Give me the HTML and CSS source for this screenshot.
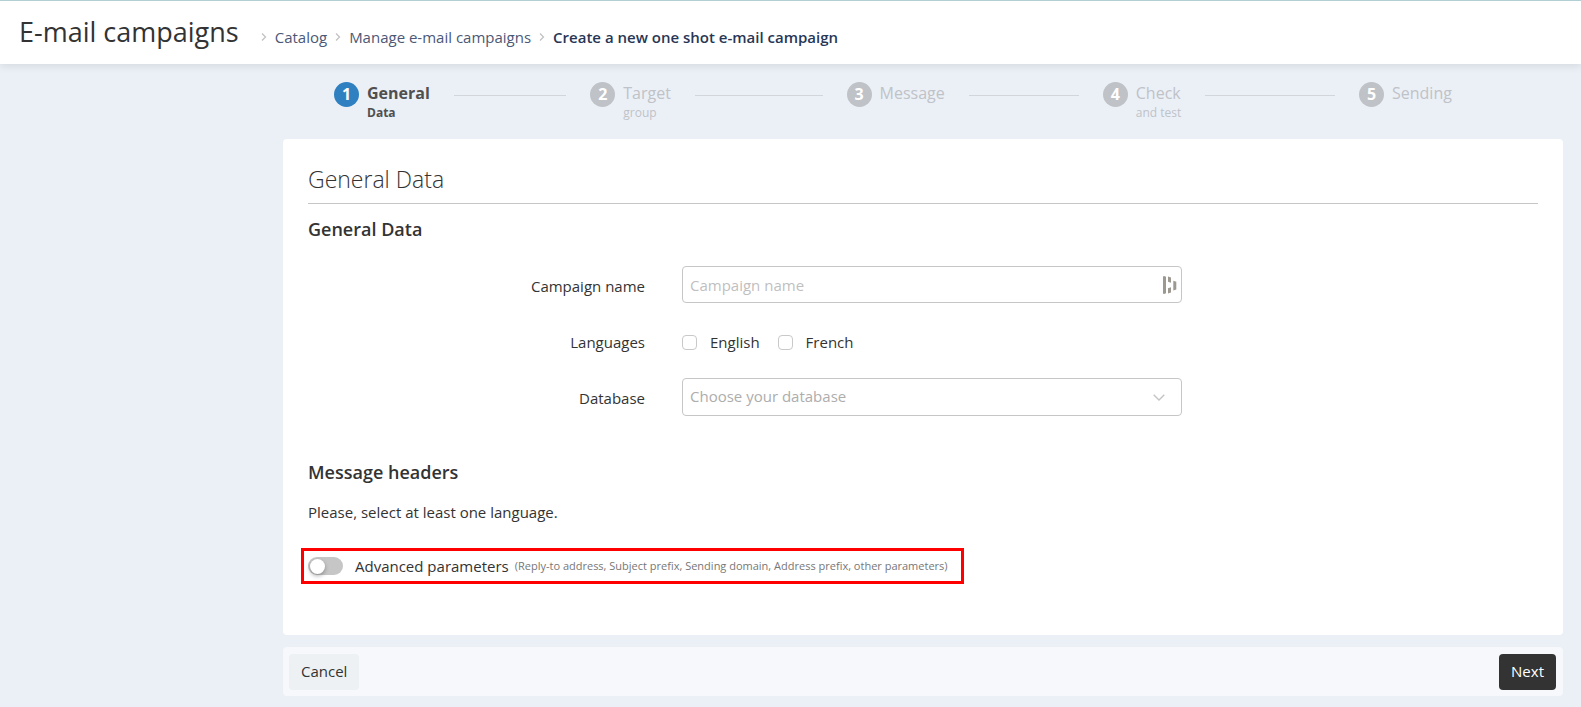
FILE: index.html
```html
<!DOCTYPE html>
<html lang="en">
<head>
<meta charset="utf-8">
<meta name="viewport" content="width=device-width, initial-scale=1">
<title>E-mail campaigns</title>
<link rel="stylesheet" href="styles.css">
</head>
<body>
<header class="topbar">
  <h1 class="topbar-title">E-mail campaigns</h1>
  <nav class="crumbs" aria-label="Breadcrumb">
    <svg class="crumb-sep" viewBox="0 0 6 8" aria-hidden="true"><path d="M1 0.5 4.5 4 1 7.5"/></svg>
    <a class="crumb" href="#">Catalog</a>
    <svg class="crumb-sep" viewBox="0 0 6 8" aria-hidden="true"><path d="M1 0.5 4.5 4 1 7.5"/></svg>
    <a class="crumb" href="#">Manage e-mail campaigns</a>
    <svg class="crumb-sep" viewBox="0 0 6 8" aria-hidden="true"><path d="M1 0.5 4.5 4 1 7.5"/></svg>
    <a class="crumb crumb-current" href="#" aria-current="page">Create a new one shot e-mail campaign</a>
  </nav>
</header>
<main class="page">
  <ol class="steps">
    <li class="step step-active"><span class="step-num">1</span><span class="step-text"><span class="step-name">General</span><span class="step-sub">Data</span></span></li>
    <li class="step"><span class="step-num">2</span><span class="step-text"><span class="step-name">Target</span><span class="step-sub">group</span></span></li>
    <li class="step"><span class="step-num">3</span><span class="step-text"><span class="step-name">Message</span></span></li>
    <li class="step"><span class="step-num">4</span><span class="step-text"><span class="step-name">Check</span><span class="step-sub">and test</span></span></li>
    <li class="step"><span class="step-num">5</span><span class="step-text"><span class="step-name">Sending</span></span></li>
  </ol>
  <form class="form">
    <section class="card">
      <h2 class="card-title">General Data</h2>
      <h3 class="section-title">General Data</h3>
      <div class="fields">
        <div class="field">
          <label class="field-label" for="campaign-name">Campaign name</label>
          <div class="control">
            <input class="text-input" id="campaign-name" type="text" placeholder="Campaign name">
            <svg class="fill-icon" viewBox="0 0 14 18" aria-hidden="true"><path d="M0 .4 1 0 3 .7V17.3L1 18 0 17.6ZM5 .4 8 1.500V6.800L5 5.800ZM5 12.200 8 11.200V16.500L5 17.600ZM10.300 4.800 13.300 5.800V13.500L10.300 14.600Z"/></svg>
          </div>
        </div>
        <div class="field" role="group" aria-labelledby="languages">
          <span class="field-label" id="languages">Languages</span>
          <div class="checks">
            <label class="check"><input class="check-box" type="checkbox">English</label>
            <label class="check"><input class="check-box" type="checkbox">French</label>
          </div>
        </div>
        <div class="field">
          <label class="field-label" for="database">Database</label>
          <div class="control">
            <select class="select-input" id="database"><option>Choose your database</option></select>
            <svg class="chevron" viewBox="0 0 12 7" aria-hidden="true"><path d="M.7.8 6 6 11.300.8"/></svg>
          </div>
        </div>
      </div>
      <h3 class="section-title">Message headers</h3>
      <p class="note">Please, select at least one language.</p>
      <label class="advanced">
        <input class="toggle" type="checkbox" role="switch">
        <span class="advanced-name">Advanced parameters</span>
        <small class="advanced-hint">(Reply-to address, Subject prefix, Sending domain, Address prefix, other parameters)</small>
      </label>
    </section>
    <div class="actions">
      <button class="btn" type="button">Cancel</button>
      <button class="btn btn-dark" type="button">Next</button>
    </div>
  </form>
</main>
</body>
</html>
```
FILE: styles.css
```css
* { box-sizing: border-box; }
body {
  margin: 0;
  min-height: 100vh;
  background: #ebf0f7;
  color: #333;
  font: 15px/20px "Open Sans", "Noto Sans", sans-serif;
}
h1, h2, h3, p, ol { margin: 0; padding: 0; }
.topbar {
  position: relative;
  display: flex;
  align-items: flex-start;
  gap: 22px;
  height: 64px;
  padding: 13px 19px 0;
  background: #fff;
  border-top: 1px solid #b2cfd4;
  box-shadow: 0 2px 8px rgba(0, 0, 0, .1);
}
.topbar-title { font-size: 27px; line-height: 36px; font-weight: 500; }
.crumbs { display: flex; align-items: center; gap: 8px; margin-top: 13px; }
.crumb { color: #4b5876; text-decoration: none; }
.crumb-current { color: #283655; font-weight: 600; }
.crumb-sep { width: 6px; height: 8px; fill: none; stroke: #c2c2c2; stroke-width: 1.3; }
.page { padding: 18px 18px 11px 283px; }
.steps {
  display: grid;
  grid-template-columns: repeat(4, 1fr) 204px;
  height: 57px;
  padding-left: 51px;
  list-style: none;
}
.step { display: flex; align-items: flex-start; color: #bfc2c7; }
.step-num {
  flex: none;
  width: 25px;
  height: 25px;
  border-radius: 50%;
  background: #bfc2c7;
  color: #fff;
  font-size: 16px;
  font-weight: 700;
  line-height: 25px;
  text-align: center;
}
.step-text { display: flex; flex-direction: column; margin-left: 8px; }
.step-name { font-size: 16px; line-height: 22px; }
.step-sub { font-size: 12px; line-height: 17px; }
.step:not(:last-child)::after {
  content: "";
  flex: 1;
  height: 1px;
  margin: 13px 24px 0;
  background: #d2d6da;
}
.step-active { color: #4f4f4f; font-weight: 700; }
.step-active .step-num { background: #2f80c0; }
.card { padding: 24px 25px 51px; background: #fff; border-radius: 4px; }
.card-title {
  padding-bottom: 8px;
  border-bottom: 1px solid #c6c6c6;
  font-size: 23px;
  line-height: 32px;
  font-weight: 300;
}
.section-title { margin-top: 13px; font-size: 18px; line-height: 24px; font-weight: 600; }
.fields { display: flex; flex-direction: column; gap: 18px; padding: 25px 0 31px; }
.field {
  display: grid;
  grid-template-columns: 337px minmax(0, 500px);
  gap: 37px;
  align-items: center;
  min-height: 38px;
}
.field-label { padding-top: 2px; text-align: right; }
.control { position: relative; }
.text-input, .select-input {
  display: block;
  width: 100%;
  height: 38px;
  padding: 0 32px 2px 7px;
  border: 1px solid #c6c6c6;
  border-radius: 4px;
  background: #fff;
  color: #333;
  font: inherit;
  appearance: none;
}
.text-input { height: 37px; padding-bottom: 0; margin-bottom: 1px; }
.text-input::placeholder { color: #bfbfbf; opacity: 1; }
.select-input { color: #adadad; }
.fill-icon { position: absolute; top: 10px; right: 5px; width: 14px; height: 18px; fill: #9d9890; }
.chevron { position: absolute; top: 16px; right: 17px; width: 12px; height: 7px; fill: none; stroke: #c4c4c4; stroke-width: 1.4; }
.checks { display: flex; gap: 18px; padding-top: 2px; }
.check { display: flex; align-items: center; gap: 13px; }
.check-box { width: 15px; height: 15px; margin: 0; border: 1px solid #c9c9c9; border-radius: 4px; background: #fff; appearance: none; }
.check-box:checked { background: #2f80c0; }
.note { margin-top: 18px; }
.advanced {
  display: inline-flex;
  align-items: center;
  height: 36px;
  margin: 26px 0 0 -7px;
  padding: 0 13px 0 4px;
  border: 3px solid #f00;
}
.toggle {
  display: flex;
  align-items: center;
  width: 35px;
  height: 18px;
  margin: 0;
  padding: 0 2px;
  border-radius: 9px;
  background: #c6c6c6;
  appearance: none;
}
.toggle::before { content: ""; width: 15px; height: 15px; border-radius: 50%; background: #fff; box-shadow: 0 2px 4px rgba(0, 0, 0, .3); }
.toggle:checked { justify-content: flex-end; background: #2f80c0; }
.advanced-name { margin: 0 6px 0 12px; }
.advanced-hint { color: #777; font-size: 11px; }
.actions {
  display: flex;
  justify-content: space-between;
  margin-top: 12px;
  padding: 7px 7px 6px 6px;
  border-radius: 4px;
  background: #f6f8fc;
}
.btn { height: 36px; padding: 0 12px 2px; border: 0; border-radius: 4px; background: #edf1f3; color: #333; font: inherit; }
.btn-dark { background: #333; color: #fff; }
```
